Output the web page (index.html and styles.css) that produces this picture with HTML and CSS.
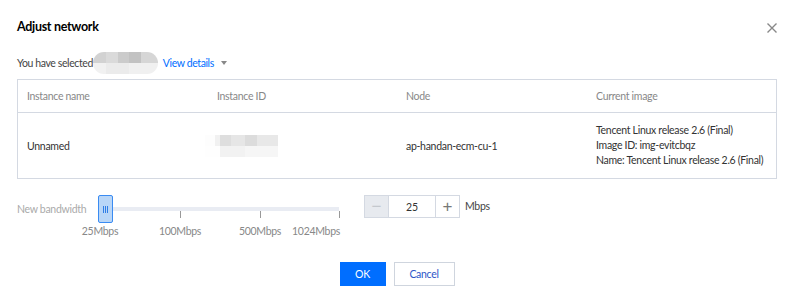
FILE: index.html
```html
<!DOCTYPE html>
<html>

<head>
    <title>Adjust network</title>
    <link rel="stylesheet" href="styles.css">
</head>

<body>
    <div class="dialog">
        <div class="dialog-header">
            <h3 class="dialog-title">Adjust network</h3>
            <button class="close" title="Close">
                <svg width="10" height="10" viewBox="0 0 10 10">
                    <path d="M0.5 0.5 L9.5 9.5 M9.5 0.5 L0.5 9.5" stroke="#888" stroke-width="1.4" fill="none" />
                </svg>
            </button>
        </div>

        <div class="selected">
            <span>You have selected</span>
            <span class="blur blur-pill"></span>
            <a class="link" href="#">View details</a>
            <span class="caret"></span>
        </div>

        <div class="table">
            <div class="cell head">Instance name</div>
            <div class="cell head">Instance ID</div>
            <div class="cell head">Node</div>
            <div class="cell head">Current image</div>

            <div class="cell">Unnamed</div>
            <div class="cell"><span class="blur blur-id"></span></div>
            <div class="cell">ap-handan-ecm-cu-1</div>
            <div class="cell image">
                <div>Tencent Linux release 2.6 (Final)</div>
                <div>Image ID: img-evitcbqz</div>
                <div>Name: Tencent Linux release 2.6 (Final)</div>
            </div>
        </div>

        <div class="bandwidth">
            <div class="field-label">New bandwidth</div>
            <div class="slider">
                <div class="track"></div>
                <div class="handle"><i></i><i></i><i></i></div>
                <span class="tick" style="left: 82px"></span>
                <span class="tick" style="left: 162px"></span>
                <span class="tick" style="left: 241px"></span>
                <span class="mark" style="left: 2px">25Mbps</span>
                <span class="mark" style="left: 82px">100Mbps</span>
                <span class="mark" style="left: 162px">500Mbps</span>
                <span class="mark mark-end">1024Mbps</span>
            </div>
            <div class="stepper">
                <button class="step step-minus" disabled>&minus;</button>
                <input class="step-input" type="text" value="25">
                <button class="step step-plus">+</button>
            </div>
            <span class="unit">Mbps</span>
        </div>

        <div class="footer">
            <button class="btn btn-primary">OK</button>
            <button class="btn btn-weak">Cancel</button>
        </div>
    </div>
</body>

</html>
```

FILE: styles.css
```css
body {
    margin: 0;
    background: #fff;
    font-family: Lato, "Liberation Sans", Arial, sans-serif;
    font-size: 10.5px;
    letter-spacing: -0.3px;
    color: #333;
}

.dialog {
    width: 760px;
    padding: 16px 19px 0 17px;
}

.dialog-header {
    display: flex;
    justify-content: space-between;
    align-items: center;
    height: 20px;
}

.dialog-title {
    margin: 0;
    font-size: 12.5px;
    font-weight: bold;
    color: #000;
}

.close {
    border: none;
    background: none;
    padding: 0;
    width: 10px;
    height: 10px;
    margin-top: 3px;
    cursor: pointer;
    display: flex;
}

.selected {
    display: flex;
    align-items: center;
    height: 22px;
    margin-top: 16px;
    color: #444;
    white-space: nowrap;
    letter-spacing: -0.4px;
}

.blur {
    display: inline-block;
}

.blur-pill {
    width: 65px;
    height: 22px;
    border-radius: 11px;
    margin: 0 5px 0 0;
    background:
        linear-gradient(to right, #d2d2d2 0 13px, #dadada 13px 25px, #cbcbcb 25px 36px, #c2c2c2 36px 48px, #d6d6d6 48px) top / 100% 11px no-repeat,
        linear-gradient(to right, #f1f1f1 0 13px, #ebebeb 13px 36px, #f0f0f0 36px) bottom / 100% 11px no-repeat;
}

.link {
    color: #006eff;
    text-decoration: none;
}

.caret {
    width: 0;
    height: 0;
    margin-left: 7px;
    border-left: 3.5px solid transparent;
    border-right: 3.5px solid transparent;
    border-top: 4px solid #888;
}

.table {
    display: grid;
    grid-template-columns: 190px 189px 190px 189px;
    margin-top: 5px;
    border: 1px solid #d4d9e2;
}

.cell {
    display: flex;
    flex-direction: column;
    justify-content: center;
    padding: 0 9px;
    height: 65px;
    color: #333;
    white-space: nowrap;
}

.cell.head {
    height: 32px;
    color: #888;
    border-bottom: 1px solid #d4d9e2;
}

.image {
    line-height: 15px;
}

.blur-id {
    width: 73px;
    height: 22px;
    margin-left: -12px;
    background:
        linear-gradient(to right, #fdfdfd 0 10px, #f1f1f1 10px 15px, #dedede 15px 26px, #e6e6e6 26px 40px, #dcdcdc 40px 52px, #e8e8e8 52px) top / 100% 11px no-repeat,
        linear-gradient(to right, #fefefe 0 15px, #f2f2f2 15px 40px, #f6f6f6 40px) bottom / 100% 11px no-repeat;
}

.bandwidth {
    display: flex;
    align-items: flex-start;
    margin-top: 16px;
}

.field-label {
    width: 81px;
    line-height: 28px;
    color: #aaa;
    white-space: nowrap;
}

.slider {
    position: relative;
    width: 242px;
    height: 43px;
}

.track {
    position: absolute;
    left: 15px;
    right: 1px;
    top: 12px;
    height: 4px;
    background: #e9ecf3;
}

.handle {
    position: absolute;
    left: 0;
    top: 0;
    width: 13px;
    height: 26px;
    border: 1px solid #3a8bf2;
    border-radius: 2px;
    background: #b9d6f7;
    display: flex;
    justify-content: center;
    align-items: center;
    gap: 1px;
}

.handle i {
    width: 1px;
    height: 7px;
    background: #2f7de6;
}

.tick {
    position: absolute;
    top: 16px;
    width: 1px;
    height: 7px;
    background: #999;
}

.mark {
    position: absolute;
    top: 30px;
    transform: translateX(-50%);
    color: #888;
    white-space: nowrap;
}

.mark-end {
    right: 0;
    transform: none;
}

.stepper {
    display: flex;
    margin-left: 24px;
    height: 23px;
}

.step {
    width: 25px;
    height: 23px;
    padding: 0;
    border: 1px solid #d4d9e2;
    background: #fff;
    color: #777;
    font-family: "Liberation Sans", Arial, sans-serif;
    font-size: 17px;
    line-height: 19px;
}

.step-minus {
    background: #e7eaef;
    color: #c4c8ce;
}

.step-input {
    width: 46px;
    height: 23px;
    box-sizing: border-box;
    border: 1px solid #d4d9e2;
    border-left: none;
    border-right: none;
    text-align: center;
    font: inherit;
    color: #333;
    padding: 0;
}

.unit {
    margin-left: 5px;
    line-height: 23px;
    color: #444;
}

.footer {
    display: flex;
    justify-content: center;
    gap: 8px;
    margin-top: 24px;
}

.btn {
    height: 24px;
    padding: 0;
    font: inherit;
    letter-spacing: inherit;
    cursor: pointer;
}

.btn-primary {
    width: 46px;
    border: none;
    background: #006eff;
    color: #fff;
}

.btn-weak {
    width: 61px;
    border: 1px solid #cfd5de;
    background: #fff;
    color: #2d55c8;
}
```
